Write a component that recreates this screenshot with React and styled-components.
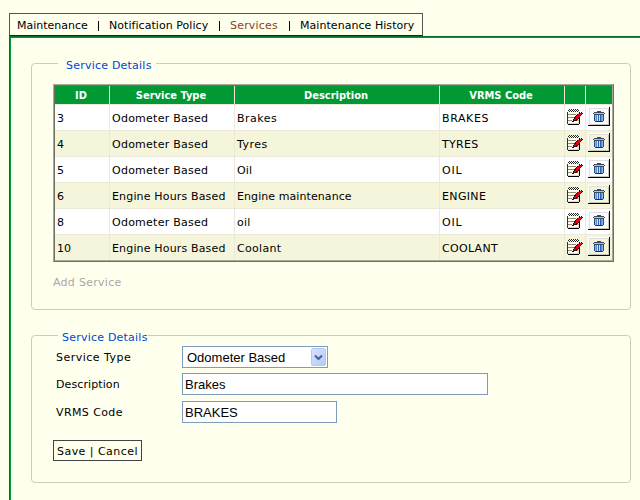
import React from 'react';
import styled, { createGlobalStyle } from 'styled-components';

const GlobalStyle = createGlobalStyle`
  * { box-sizing: border-box; }
  body {
    margin: 0;
    background: #ffffee;
    color: #000;
    font: 11px/14px "DejaVu Sans", sans-serif;
    overflow: hidden;
  }
`;

const Page = styled.main`
  width: 640px;
  height: 500px;
  padding: 13px 0 0 9px;
  background: #ffffee;
  overflow: hidden;
`;

const Label = styled.span`
  letter-spacing: ${(p) => p.$track || 0}px;
  white-space: nowrap;
`;

const TabBar = styled.nav`
  display: flex;
  align-items: center;
  width: 414px;
  height: 23px;
  padding: 3px 0 0 7px;
  border: 1px solid #555;
  border-bottom-color: #222;
`;

const Tab = styled(Label)`
  flex: none;
  width: ${(p) => p.$width}px;
  color: ${(p) => (p.$active ? '#8b4513' : '#000')};
`;

const Divider = styled.span`
  flex: none;
  width: 1px;
  height: 10px;
  margin-right: ${(p) => p.$gap}px;
  background: #000;
`;

const Content = styled.div`
  height: 464px;
  padding: 17px 0 0 21px;
  border: solid #00732a;
  border-width: 1px 0 0 1px;
  box-shadow: inset 1px 1px #009933;
`;

const Group = styled.fieldset`
  display: block;
  min-width: 0;
  width: 600px;
  height: ${(p) => p.$height}px;
  margin: 0 0 ${(p) => p.$after}px;
  padding: 0 0 0 21px;
  border: 1px solid #ccccbb;
  border-radius: 4px;
`;

const Legend = styled.legend`
  display: block;
  height: 18px;
  width: ${(p) => p.$width}px;
  margin-left: 5px;
  padding: 5px 0 0 ${(p) => p.$pad}px;
  color: #0046d5;
`;

const TableFrame = styled.div`
  width: 561px;
  height: 178px;
  margin-top: 12px;
  border: 1px solid #aca899;
  border-right-color: #716f64;
  border-bottom-color: #716f64;
`;

const Grid = styled.div`
  display: grid;
  grid-template-columns: 55px 125px 205px 125px 21px 26px;
  grid-template-rows: 19px repeat(5, 26px) 25px;
  height: 176px;
  border: 1px solid #716f64;
  border-right-color: #aca899;
  border-bottom-color: #aca899;
`;

const Head = styled.div`
  display: flex;
  justify-content: center;
  padding: 3px 2px 0 0;
  background: #009933;
  color: #fff;
  border-right: ${(p) => (p.$last ? 0 : 1)}px solid #ece9d8;
  border-bottom: 1px solid #ece9d8;
  font: bold 11px/14px "DejaVu Sans Condensed", "DejaVu Sans", sans-serif;
`;

const Cell = styled.div`
  display: flex;
  align-items: center;
  padding: ${(p) => (p.$icon ? 0 : 3)}px 0 0 2px;
  background: ${(p) => (p.$shaded ? '#f5f5dc' : '#fff')};
  border-right: ${(p) => (p.$last ? 0 : 1)}px solid #ece9d8;
  border-bottom: ${(p) => (p.$bottom ? 0 : 1)}px solid #ece9d8;
`;

const DeleteButton = styled.button`
  display: flex;
  align-items: flex-start;
  width: 22px;
  height: 19px;
  margin: 0 0 2px;
  padding: 4px 0 0 5px;
  background: transparent;
  border: 0 solid #000;
  border-width: 0 1px 1px 0;
  box-shadow: inset 1px 1px #fff, inset 2px 2px #dddfe3, inset -1px -1px #c8c6bb;
`;

const Icon = styled.svg`
  display: block;
  flex: none;
`;

const Disabled = styled(Label)`
  display: block;
  margin-top: 14px;
  color: #aca899;
  text-shadow: 1px 1px #fff;
`;

const Form = styled.div`
  display: grid;
  grid-template-columns: 129px auto;
  grid-template-rows: 27px 28px 39px;
  justify-content: start;
  margin-top: 2px;
`;

const FieldName = styled(Label)`
  padding: 5px 0 0 3px;
`;

const Field = styled.div`
  display: flex;
  justify-content: space-between;
  width: ${(p) => p.$width}px;
  height: 22px;
  padding-left: ${(p) => (p.$indent ? 4 : 2)}px;
  background: #fff;
  border: 1px solid #7f9db9;
  font: 13px/22px "Liberation Sans", sans-serif;
`;

const DropArrow = styled.span`
  display: flex;
  align-items: center;
  justify-content: center;
  width: 15px;
  height: 18px;
  margin: 1px;
  border: 1px solid #b5c7f5;
  border-radius: 2px;
  background: linear-gradient(135deg, #d6e2fd, #b4cbfb);
`;

const Actions = styled.div`
  width: 89px;
  height: 21px;
  padding: 4px 0 0 3px;
  border: 1px solid #444;
`;

function EditIcon() {
  return (
    <Icon width="16" height="17" viewBox="0 0 16 17" shapeRendering="crispEdges">
      <path fill="#fffff4" d="M1 1h11v14H1z" />
      <path fill="#222" d="M2 0h1v1H2zM4 0h1v1H4zM6 0h1v1H6zM8 0h1v1H8zM10 0h1v1h-1zM1 1h1v1H1zM3 1h1v1H3zM5 1h1v1H5zM7 1h1v1H7zM9 1h1v1H9zM11 1h1v1h-1zM2 2h1v1H2zM4 2h1v1H4zM6 2h1v1H6zM8 2h1v1H8zM10 2h1v1h-1z" />
      <path fill="#333322" d="M0 3h1v12H0z" />
      <path fill="#000" d="M12 3h1v12h-1zM1 15h11v1H1z" />
      <path fill="#deddc4" d="M1 14h11v1H1zM11 4h1v10h-1z" />
      <path fill="#8d8d74" d="M1 5h8v1H1zM1 8h6v1H1zM1 11h4v1H1zM9 11h2v1H9z" />
      <path fill="#500008" d="M14 3h1v1h1v1h-1v1h-1v1h-1v2h-1v1h-1v1h-1v1H7v1H5v-1h1v-2h1V8h1V7h1V6h1V5h2V4h2z" />
      <path fill="#e80014" d="M13 4h2v1h-2zM11 5h3v1h-3zM10 6h3v1h-3zM9 7h4v1H9zM9 8h3v1H9zM8 9h3v1H8zM7 10h2v1H7z" />
    </Icon>
  );
}

function TrashIcon() {
  return (
    <Icon width="12" height="12" viewBox="0 0 12 12" shapeRendering="crispEdges">
      <path fill="#3a4a62" d="M4 0h4v1H4zM1 1h10v1H1zM0 2h12v1H0zM1 3h10v1H1z" />
      <path fill="#a8c5ed" d="M1 2h10v1H1z" />
      <path fill="#1f4d8c" d="M1 4h10v6H1zM2 10h8v1H2z" />
      <path fill="#8ab4ec" d="M2 4h1v6H2zM9 4h1v6H9z" />
      <path fill="#c4dcff" d="M4 4h1v6H4zM6 4h1v6H6z" />
      <path fill="#5c90d8" d="M3 4h1v6H3zM8 4h1v6H8z" />
      <path fill="#2f62a8" d="M5 4h1v6H5zM7 4h1v6H7z" />
      <path fill="#14305c" d="M3 11h6v-1H3z" />
    </Icon>
  );
}

const headers = ['ID', 'Service Type', 'Description', 'VRMS Code', '', ''];

const services = [
  ['3', 'Odometer Based', 'Brakes', 'BRAKES'],
  ['4', 'Odometer Based', 'Tyres', 'TYRES'],
  ['5', 'Odometer Based', 'Oil', 'OIL'],
  ['6', 'Engine Hours Based', 'Engine maintenance', 'ENGINE'],
  ['8', 'Odometer Based', 'oil', 'OIL'],
  ['10', 'Engine Hours Based', 'Coolant', 'COOLANT'],
];

const tracking = {
  'Odometer Based': 0.25,
  'Engine Hours Based': 0.16,
  Brakes: 0.5,
  Tyres: 0.5,
  Oil: 0.2,
  oil: 0.2,
  Coolant: 0.3,
  'Engine maintenance': 0.08,
  BRAKES: 0.6,
  TYRES: 0.3,
  OIL: 0.8,
  ENGINE: 0.35,
  COOLANT: 0.3,
};

export default function App() {
  return (
    <Page>
      <GlobalStyle />
      <TabBar>
        <Tab $width={81}>Maintenance</Tab>
        <Divider $gap={10} />
        <Tab $width={110} $track={0.05}>Notification Policy</Tab>
        <Divider $gap={10} />
        <Tab $width={59} $track={0.2} $active>Services</Tab>
        <Divider $gap={10} />
        <Tab $width={115} $track={0.05}>Maintenance History</Tab>
      </TabBar>
      <Content>
        <Group $height={256} $after={16}>
          <Legend $pad={8} $width={98}>
            <Label $track={0.22}>Service Details</Label>
          </Legend>
          <TableFrame>
            <Grid>
              {headers.map((h, i) => (
                <Head key={i} $last={i === 5}>{h}</Head>
              ))}
              {services.map((row, r) => {
                const look = { $shaded: r % 2 === 1, $bottom: r === 5 };
                return (
                  <React.Fragment key={row[0]}>
                    {row.map((text, c) => (
                      <Cell key={c} {...look}>
                        <Label $track={tracking[text]}>{text}</Label>
                      </Cell>
                    ))}
                    <Cell {...look} $icon><EditIcon /></Cell>
                    <Cell {...look} $icon $last>
                      <DeleteButton aria-label="Delete service"><TrashIcon /></DeleteButton>
                    </Cell>
                  </React.Fragment>
                );
              })}
            </Grid>
          </TableFrame>
          <Disabled $track={0.28}>Add Service</Disabled>
        </Group>
        <Group $height={157} $after={0}>
          <Legend $pad={4} $width={90}>
            <Label $track={0.22}>Service Details</Label>
          </Legend>
          <Form>
            <FieldName $track={0.48}>Service Type</FieldName>
            <Field $width={146} $indent>
              Odometer Based
              <DropArrow>
                <Icon width="9" height="7" viewBox="0 0 9 7">
                  <path d="M1 1.5l3.5 3.5L8 1.5" fill="none" stroke="#4d6185" strokeWidth="2" />
                </Icon>
              </DropArrow>
            </Field>
            <FieldName $track={0.1}>Description</FieldName>
            <Field $width={306}>Brakes</Field>
            <FieldName $track={0.4}>VRMS Code</FieldName>
            <Field $width={155}>BRAKES</Field>
          </Form>
          <Actions><Label $track={0.46}>Save | Cancel</Label></Actions>
        </Group>
      </Content>
    </Page>
  );
}
